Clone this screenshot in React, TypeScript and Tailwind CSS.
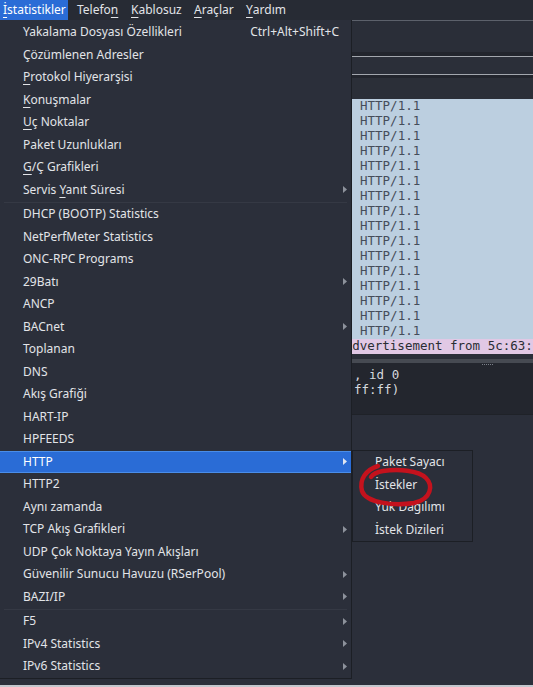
import React from 'react';

type Item = {
  label: React.ReactNode;
  shortcut?: string;
  sub?: boolean;
  active?: boolean;
};

const U = ({ children }: { children: React.ReactNode }) => (
  <span className="underline decoration-1 underline-offset-[3px]">{children}</span>
);

const GROUP_A: Item[] = [
  { label: 'Yakalama Dosyası Özellikleri', shortcut: 'Ctrl+Alt+Shift+C' },
  { label: 'Çözümlenen Adresler' },
  { label: <><U>P</U>rotokol Hiyerarşisi</> },
  { label: <><U>K</U>onuşmalar</> },
  { label: <><U>U</U>ç Noktalar</> },
  { label: 'Paket Uzunlukları' },
  { label: <><U>G</U>/Ç Grafikleri</> },
  { label: <>Servis <U>Y</U>anıt Süresi</>, sub: true },
];

const GROUP_B: Item[] = [
  { label: 'DHCP (BOOTP) Statistics' },
  { label: 'NetPerfMeter Statistics' },
  { label: 'ONC-RPC Programs' },
  { label: '29Batı', sub: true },
  { label: 'ANCP' },
  { label: 'BACnet', sub: true },
  { label: 'Toplanan' },
  { label: 'DNS' },
  { label: 'Akış Grafiği' },
  { label: 'HART-IP' },
  { label: 'HPFEEDS' },
  { label: 'HTTP', sub: true, active: true },
  { label: 'HTTP2' },
  { label: 'Aynı zamanda' },
  { label: 'TCP Akış Grafikleri', sub: true },
  { label: 'UDP Çok Noktaya Yayın Akışları' },
  { label: 'Güvenilir Sunucu Havuzu (RSerPool)', sub: true },
  { label: 'BAZI/IP', sub: true },
];

const GROUP_C: Item[] = [
  { label: 'F5', sub: true },
  { label: 'IPv4 Statistics', sub: true },
  { label: 'IPv6 Statistics', sub: true },
];

const Arrow = ({ light }: { light?: boolean }) => (
  <svg width="4" height="7" viewBox="0 0 4 7" className={light ? 'fill-[#dfe6f2]' : 'fill-[#8d929b]'}>
    <polygon points="0,0 4,3.5 0,7" />
  </svg>
);

function MenuRow({ item }: { item: Item }) {
  return (
    <div
      className={`flex h-[22.5px] items-center pl-[23px] ${
        item.active ? 'bg-[#2a6cd6] text-white shadow-[inset_0_1px_0_#4a8de8,inset_0_-1px_0_#4a8de8]' : ''
      }`}
    >
      <span className="flex-1 whitespace-nowrap">{item.label}</span>
      {item.shortcut && <span className="whitespace-nowrap">{item.shortcut}</span>}
      <span className="flex w-[12px] justify-end pr-[4px]">{item.sub && <Arrow light={item.active} />}</span>
    </div>
  );
}

const Sep = () => (
  <div className="flex h-[2px] items-center px-[4px]">
    <div className="h-px w-full bg-[#353944]" />
  </div>
);

const TOP = [
  { label: <><U>İ</U>statistikler</>, cls: 'w-[68px] pl-[3px] bg-[#2a6cd6] text-white' },
  { label: <>Telefo<U>n</U></>, cls: 'w-[57px] pl-[9px]' },
  { label: <><U>K</U>ablosuz</>, cls: 'w-[63px] pl-[6px]' },
  { label: <><U>A</U>raçlar</>, cls: 'w-[52px] pl-[6px]' },
  { label: <><U>Y</U>ardım</>, cls: 'pl-[6px]' },
];

export default function App() {
  const httpRows = Array.from({ length: 16 });

  return (
    <div className="relative flex h-[687px] w-[533px] flex-col overflow-hidden bg-[#2b2f3a] font-['Noto_Sans',sans-serif] text-[12px] text-[#e2e4e8]">
      {/* menubar */}
      <div className="flex h-[20px] shrink-0 bg-[#272b34]">
        {TOP.map((t, i) => (
          <div key={i} className={`flex h-full items-center whitespace-nowrap ${t.cls}`}>
            {t.label}
          </div>
        ))}
      </div>

      {/* main window behind the menu */}
      <div className="h-px shrink-0 bg-[#5c616b]" />
      <div className="h-[31px] shrink-0 bg-[#2a2e38]" />
      <div className="h-[4px] shrink-0 bg-[#22252d]" />
      <div className="h-px shrink-0 bg-[#a3a7ae]" />
      <div className="h-[17px] shrink-0 bg-[#2b2f39]" />
      <div className="h-px shrink-0 bg-[#a3a7ae]" />
      <div className="h-[3px] shrink-0 bg-[#22252d]" />
      <div className="h-[21px] shrink-0 bg-[#2b2f38]" />

      <div className="shrink-0 bg-[#bccfe0] font-['DejaVu_Sans_Mono',monospace] text-[12.5px] text-[#454d5a]">
        {httpRows.map((_, i) => (
          <div key={i} className="flex h-[15px] items-center whitespace-nowrap pl-[360px] leading-none">
            HTTP/1.1
          </div>
        ))}
        <div className="flex h-[15px] items-center overflow-hidden whitespace-nowrap bg-[#e1c8e5] pl-[292px] leading-none text-[#2a2d33]">
          Router Advertisement from 5c:63:
        </div>
      </div>

      <div className="h-[5px] shrink-0 bg-[#2b2f39]" />
      <div className="h-[4px] shrink-0 bg-[#464a52]" />
      <div className="relative h-[51px] shrink-0 bg-[#23262e] pt-[5px] font-['DejaVu_Sans_Mono',monospace] text-[12.5px] text-[#d6d9de]">
        <div className="absolute left-[482px] top-[1px] flex gap-[1px]">
          {Array.from({ length: 6 }).map((_, i) => (
            <span key={i} className="h-px w-px bg-[#7a7f88]" />
          ))}
        </div>
        <div className="flex h-[15px] items-center whitespace-nowrap pl-[354px] leading-none">, id 0</div>
        <div className="flex h-[15px] items-center whitespace-nowrap pl-[354px] leading-none">ff:ff)</div>
      </div>
      <div className="h-px shrink-0 bg-[#1f2228]" />
      <div className="flex-1 bg-[#2b2f3a]" />
      <div className="h-[2px] shrink-0 bg-[#c3c7cd]" />

      {/* dropdown menu */}
      <div className="absolute left-0 top-[20px] w-[352px] border-b border-r border-[#1c1f25] bg-[#2b2f3a] pt-px">
        {GROUP_A.map((it, i) => (
          <MenuRow key={`a${i}`} item={it} />
        ))}
        <Sep />
        {GROUP_B.map((it, i) => (
          <MenuRow key={`b${i}`} item={it} />
        ))}
        <Sep />
        {GROUP_C.map((it, i) => (
          <MenuRow key={`c${i}`} item={it} />
        ))}
      </div>

      {/* HTTP submenu */}
      <div className="absolute left-[352px] top-[450px] w-[121px] border border-[#1c1f25] bg-[#2b2f3a]">
        {['Paket Sayacı', 'İstekler', 'Yük Dağılımı', 'İstek Dizileri'].map((s) => (
          <div key={s} className="flex h-[22.5px] items-center whitespace-nowrap pl-[22px]">
            {s}
          </div>
        ))}
      </div>

      {/* red annotation circle */}
      <svg className="pointer-events-none absolute left-0 top-0" width="533" height="687">
        <path
          d="M 378 466 C 366 470, 359 479, 362 491 C 366 503, 394 506, 414 503 C 432 499, 433 485, 426 478 C 418 470, 398 469, 383 471 C 377 472, 373 474, 371 477"
          fill="none"
          stroke="#c4121d"
          strokeWidth="4.5"
          strokeLinecap="round"
        />
      </svg>
    </div>
  );
}
